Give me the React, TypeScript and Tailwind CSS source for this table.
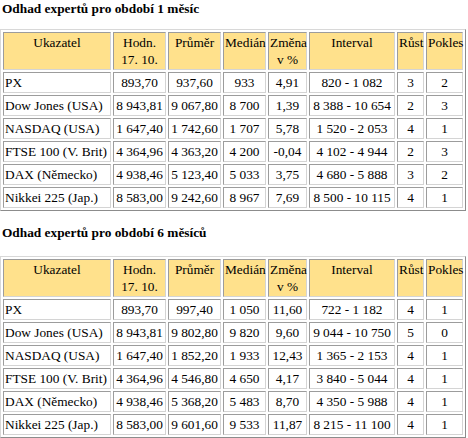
import React from "react";

type Row = [string, string, string, string, string, string, string, string];

const t1: Row[] = [
  ["PX", "893,70", "937,60", "933", "4,91", "820 - 1 082", "3", "2"],
  ["Dow Jones (USA)", "8 943,81", "9 067,80", "8 700", "1,39", "8 388 - 10 654", "2", "3"],
  ["NASDAQ (USA)", "1 647,40", "1 742,60", "1 707", "5,78", "1 520 - 2 053", "4", "1"],
  ["FTSE 100 (V. Brit)", "4 364,96", "4 363,20", "4 200", "-0,04", "4 102 - 4 944", "2", "3"],
  ["DAX (Německo)", "4 938,46", "5 123,40", "5 033", "3,75", "4 680 - 5 888", "3", "2"],
  ["Nikkei 225 (Jap.)", "8 583,00", "9 242,60", "8 967", "7,69", "8 500 - 10 115", "4", "1"],
];

const t2: Row[] = [
  ["PX", "893,70", "997,40", "1 050", "11,60", "722 - 1 182", "4", "1"],
  ["Dow Jones (USA)", "8 943,81", "9 802,80", "9 820", "9,60", "9 044 - 10 750", "5", "0"],
  ["NASDAQ (USA)", "1 647,40", "1 852,20", "1 933", "12,43", "1 365 - 2 153", "4", "1"],
  ["FTSE 100 (V. Brit)", "4 364,96", "4 546,80", "4 650", "4,17", "3 840 - 5 044", "4", "1"],
  ["DAX (Německo)", "4 938,46", "5 368,20", "5 483", "8,70", "4 350 - 5 988", "4", "1"],
  ["Nikkei 225 (Jap.)", "8 583,00", "9 601,60", "9 533", "11,87", "8 215 - 11 100", "4", "1"],
];

const cellBorder =
  "border border-t-[#9c9c9c] border-l-[#9c9c9c] border-b-[#d4d4d4] border-r-[#d4d4d4] p-[1px] font-['Liberation_Serif','DejaVu_Serif',serif]";

function Table({ rows }: { rows: Row[] }) {
  const th = `${cellBorder} bg-[#ffe18c] align-top text-center font-normal whitespace-nowrap`;
  return (
    <table className="table-fixed w-[466px] border-separate border-spacing-[2px] border border-t-[#d8d8d8] border-l-[#d8d8d8] border-b-[#8c8c8c] border-r-[#8c8c8c]">
      <thead>
        <tr>
          <th className={`${th} w-[108px]`}>Ukazatel</th>
          <th className={`${th} w-[53px]`}>
            Hodn.
            <br />
            17. 10.
          </th>
          <th className={`${th} w-[53px]`}>Průměr</th>
          <th className={`${th} w-[43px]`}>Medián</th>
          <th className={`${th} w-[39px]`}>
            Změna
            <br />v %
          </th>
          <th className={`${th} w-[86px]`}>Interval</th>
          <th className={`${th} w-[27px]`}>Růst</th>
          <th className={`${th} w-[37px]`}>Pokles</th>
        </tr>
      </thead>
      <tbody>
        {rows.map((r, i) => (
          <tr key={i}>
            {r.map((c, j) => (
              <td
                key={j}
                className={`${cellBorder} whitespace-nowrap overflow-hidden ${
                  j === 0 ? "text-left" : "text-center"
                }`}
              >
                {c}
              </td>
            ))}
          </tr>
        ))}
      </tbody>
    </table>
  );
}

export default function App() {
  return (
    <div className="w-[468px] h-[438px] bg-white text-black text-[13.33px] leading-[17px] overflow-hidden font-['Liberation_Serif','DejaVu_Serif',serif]">
      <div className="font-bold pl-[2px] mb-[12px]">Odhad expertů pro období 1 měsíc</div>
      <Table rows={t1} />
      <div className="font-bold pl-[2px] mt-[13px] mb-[15px]">Odhad expertů pro období 6 měsíců</div>
      <Table rows={t2} />
    </div>
  );
}
